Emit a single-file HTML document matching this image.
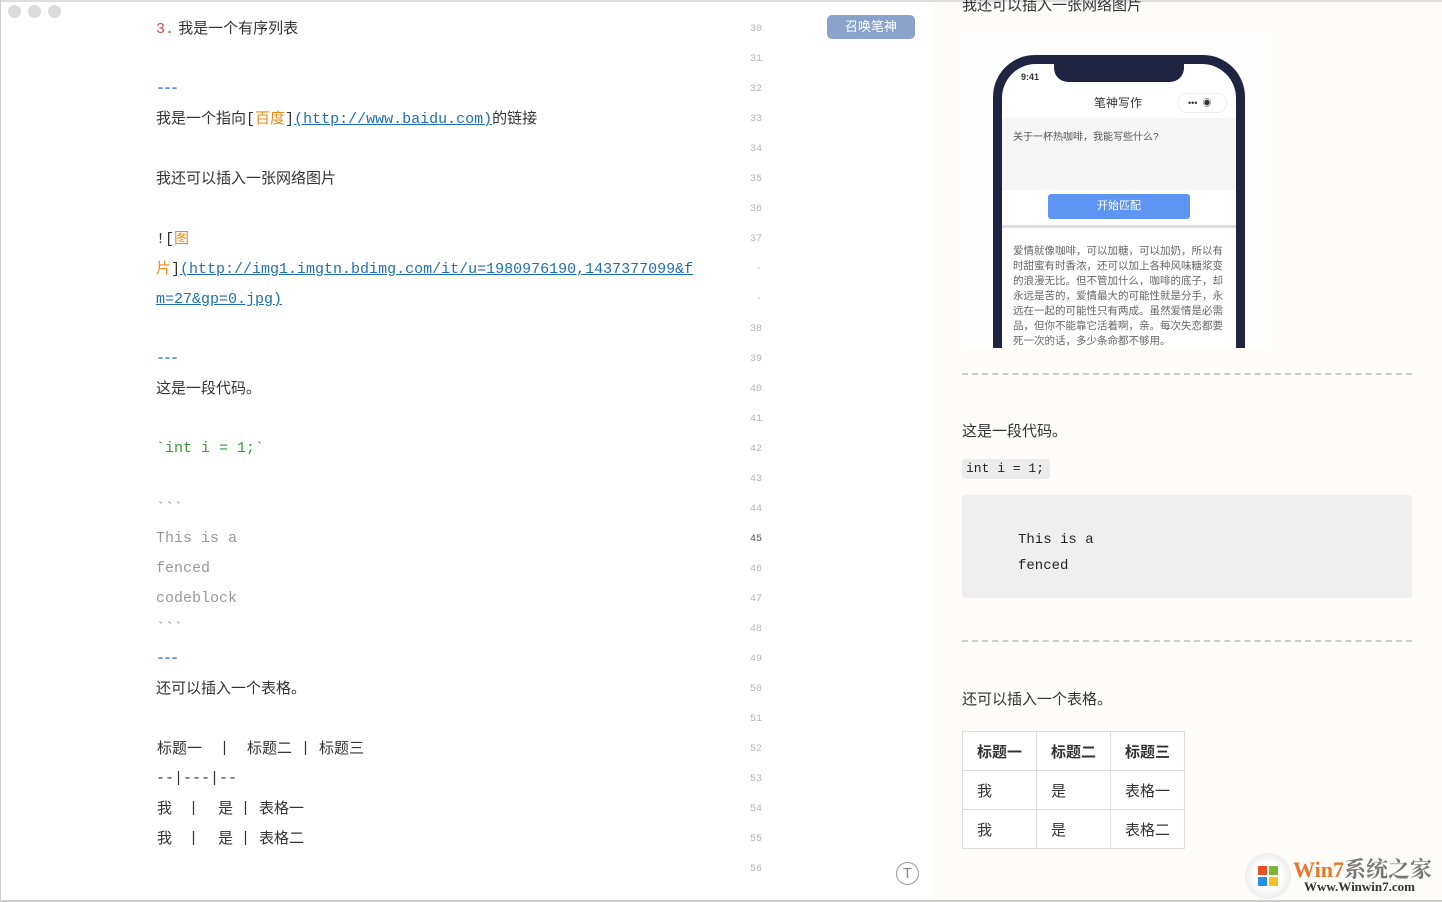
<!DOCTYPE html>
<html><head><meta charset="utf-8"><style>
*{margin:0;padding:0;box-sizing:border-box}
body{width:1442px;height:902px;overflow:hidden;background:#fff;font-family:"Liberation Sans","Noto Sans CJK SC",sans-serif;position:relative;color:#333}
.l{position:absolute;left:156px;font-size:15px;line-height:20px;white-space:nowrap;margin-top:1px}
.m{font-family:"Liberation Mono","Noto Sans CJK SC",monospace}
.n{position:absolute;left:738px;width:24px;text-align:right;font-family:"Liberation Mono",monospace;font-size:10px;color:#b5b5b5;line-height:12px;margin-top:2px}
.a{color:#1f6fb5;text-decoration:underline}
.o{color:#f08a1a}
.hr{color:#6a8ff0;font-family:"Liberation Mono",monospace;letter-spacing:-2px;font-weight:bold}
.r{position:absolute;font-size:15px;color:#333;white-space:nowrap}
td,th{border:1px solid #ddd;padding:0 14px;height:39px;font-size:15px;text-align:left;width:74px}
.p{position:absolute}
</style></head><body>
<div style="position:absolute;left:0;top:0;width:1442px;height:2px;background:#ddd"></div>
<div style="position:absolute;left:0;top:0;width:1px;height:902px;background:#ccc"></div>
<div style="position:absolute;left:0;top:900px;width:1442px;height:2px;background:#ccc"></div>
<div style="position:absolute;left:8px;top:5px;width:13px;height:13px;border-radius:50%;background:#dcdcdc"></div>
<div style="position:absolute;left:28px;top:5px;width:13px;height:13px;border-radius:50%;background:#dcdcdc"></div>
<div style="position:absolute;left:48px;top:5px;width:13px;height:13px;border-radius:50%;background:#dcdcdc"></div>

<div class="l" style="top:18px"><span class="m" style="color:#e04a3a">3.</span> 我是一个有序列表</div>
<div class="l hr" style="top:78px">---</div>
<div class="l" style="top:108px">我是一个指向<span class="m">[</span><span class="o">百度</span><span class="m">]</span><span class="m a">(http://www.baidu.com)</span>的链接</div>
<div class="l" style="top:168px">我还可以插入一张网络图片</div>
<div class="l" style="top:228px"><span class="m">![</span><span class="o">图</span></div>
<div class="l" style="top:258px"><span class="o">片</span><span class="m">]</span><span class="m a">(http://img1.imgtn.bdimg.com/it/u=1980976190,1437377099&amp;f</span></div>
<div class="l" style="top:288px"><span class="m a">m=27&amp;gp=0.jpg)</span></div>
<div class="l hr" style="top:348px">---</div>
<div class="l" style="top:378px">这是一段代码。</div>
<div class="l m" style="top:438px;color:#3a9a3a">&#96;int i = 1;&#96;</div>
<div class="l m" style="top:498px;color:#999">&#96;&#96;&#96;</div>
<div class="l m" style="top:528px;color:#999">This is a</div>
<div class="l m" style="top:558px;color:#999">fenced</div>
<div class="l m" style="top:588px;color:#999">codeblock</div>
<div class="l m" style="top:618px;color:#999">&#96;&#96;&#96;</div>
<div class="l hr" style="top:648px">---</div>
<div class="l" style="top:678px">还可以插入一个表格。</div>
<div class="l" style="top:738px;left:0;width:400px"><span class="p" style="left:157px">标题一</span><span class="p m" style="left:220px">|</span><span class="p" style="left:247px">标题二</span><span class="p m" style="left:301px">|</span><span class="p" style="left:319px">标题三</span></div>
<div class="l m" style="top:768px">--|---|--</div>
<div class="l" style="top:798px;left:0;width:400px"><span class="p" style="left:157px">我</span><span class="p m" style="left:189px">|</span><span class="p" style="left:218px">是</span><span class="p m" style="left:241px">|</span><span class="p" style="left:259px">表格一</span></div>
<div class="l" style="top:828px;left:0;width:400px"><span class="p" style="left:157px">我</span><span class="p m" style="left:189px">|</span><span class="p" style="left:218px">是</span><span class="p m" style="left:241px">|</span><span class="p" style="left:259px">表格二</span></div>

<div class="n" style="top:22px">30</div><div class="n" style="top:52px">31</div><div class="n" style="top:82px">32</div><div class="n" style="top:112px">33</div><div class="n" style="top:142px">34</div><div class="n" style="top:172px">35</div><div class="n" style="top:202px">36</div><div class="n" style="top:232px">37</div><div class="n" style="top:262px">·</div><div class="n" style="top:292px">·</div><div class="n" style="top:322px">38</div><div class="n" style="top:352px">39</div><div class="n" style="top:382px">40</div><div class="n" style="top:412px">41</div><div class="n" style="top:442px">42</div><div class="n" style="top:472px">43</div><div class="n" style="top:502px">44</div><div class="n" style="top:532px;color:#555">45</div><div class="n" style="top:562px">46</div><div class="n" style="top:592px">47</div><div class="n" style="top:622px">48</div><div class="n" style="top:652px">49</div><div class="n" style="top:682px">50</div><div class="n" style="top:712px">51</div><div class="n" style="top:742px">52</div><div class="n" style="top:772px">53</div><div class="n" style="top:802px">54</div><div class="n" style="top:832px">55</div><div class="n" style="top:862px">56</div>

<div style="position:absolute;left:827px;top:15px;width:88px;height:24px;border-radius:5px;background:#8ba3cc;color:#fff;font-size:13px;text-align:center;line-height:24px">召唤笔神</div>
<div style="position:absolute;left:896px;top:862px;width:23px;height:23px;border-radius:50%;border:1px solid #999;color:#888;font-size:15px;text-align:center;line-height:21px">T</div>

<div style="position:absolute;left:932px;top:2px;width:510px;height:898px;background:#fdfcf8"></div>
<div class="r" style="left:962px;top:-6px">我还可以插入一张网络图片</div>
<div style="position:absolute;left:962px;top:30px;width:308px;height:318px;background:#fefefe;overflow:hidden">
 <div style="position:absolute;left:31px;top:25px;width:252px;height:320px;background:#1f2440;border-radius:42px 42px 0 0"></div>
 <div style="position:absolute;left:40px;top:34px;width:234px;height:300px;background:#fff;border-radius:34px 34px 0 0"></div>
 <div style="position:absolute;left:92px;top:30px;width:130px;height:22px;background:#1f2440;border-radius:0 0 14px 14px"></div>
 <div style="position:absolute;left:59px;top:42px;font-size:9px;color:#333;font-weight:bold">9:41</div>
 <div style="position:absolute;left:132px;top:64px;font-size:12px;color:#333">笔神写作</div>
 <div style="position:absolute;left:215px;top:63px;width:50px;height:20px;border:1px solid #eee;border-radius:10px;font-size:9px;line-height:18px;padding-left:10px">•••&nbsp; ◉</div>
 <div style="position:absolute;left:40px;top:88px;width:234px;height:72px;background:#f6f6f6"></div>
 <div style="position:absolute;left:51px;top:98px;font-size:10px;color:#555">关于一杯热咖啡，我能写些什么?</div>
 <div style="position:absolute;left:86px;top:164px;width:142px;height:25px;background:#5e95f5;border-radius:3px;color:#fff;font-size:11px;text-align:center;line-height:25px">开始匹配</div>
 <div style="position:absolute;left:40px;top:195px;width:234px;height:3px;background:#ddd"></div>
 <div style="position:absolute;left:51px;top:214px;width:216px;font-size:10.5px;line-height:15px;color:#666;white-space:normal">爱情就像咖啡，可以加糖，可以加奶，所以有时甜蜜有时香浓，还可以加上各种风味糖浆变的浪漫无比。但不管加什么，咖啡的底子，却永远是苦的，爱情最大的可能性就是分手，永远在一起的可能性只有两成。虽然爱情是必需品，但你不能靠它活着啊，亲。每次失恋都要死一次的话，多少条命都不够用。</div>
</div>
<div style="position:absolute;left:962px;top:373px;width:450px;border-top:2px dashed #ccc"></div>
<div class="r" style="left:962px;top:420px">这是一段代码。</div>
<div style="position:absolute;left:962px;top:459px;width:88px;height:20px;background:#ececec;border-radius:3px;font-family:'Liberation Mono',monospace;font-size:13px;line-height:20px;padding-left:4px;color:#222;white-space:nowrap">int i = 1;</div>
<div style="position:absolute;left:962px;top:495px;width:450px;height:103px;background:#efefef;border-radius:3px;font-family:'Liberation Mono',monospace;font-size:14px;line-height:26px;padding:32px 0 0 56px;color:#222">This is a<br>fenced</div>
<div style="position:absolute;left:962px;top:640px;width:450px;border-top:2px dashed #ccc"></div>
<div class="r" style="left:962px;top:688px">还可以插入一个表格。</div>
<table style="position:absolute;left:962px;top:731px;border-collapse:collapse;background:#fff;color:#333">
<tr><th>标题一</th><th>标题二</th><th>标题三</th></tr>
<tr><td>我</td><td>是</td><td>表格一</td></tr>
<tr><td>我</td><td>是</td><td>表格二</td></tr>
</table>
<div style="position:absolute;left:1245px;top:853px;width:46px;height:46px;border-radius:50%;background:radial-gradient(circle,#fff 40%,#ddd)"></div>
<div style="position:absolute;left:1258px;top:866px;width:9px;height:9px;background:#e8502a"></div><div style="position:absolute;left:1269px;top:866px;width:9px;height:9px;background:#7bb832"></div><div style="position:absolute;left:1258px;top:877px;width:9px;height:9px;background:#2a8ee0"></div><div style="position:absolute;left:1269px;top:877px;width:9px;height:9px;background:#f5c023"></div>
<div style="position:absolute;left:1293px;top:853px;font-size:22px;font-weight:bold;color:#777;font-family:'Liberation Serif','Noto Serif CJK SC',serif"><span style="color:#e8762a">Win7</span>系统之家</div>
<div style="position:absolute;left:1304px;top:879px;font-size:13px;font-weight:bold;color:#333;font-family:'Liberation Serif',serif">Www.Winwin7.com</div>
</body></html>
